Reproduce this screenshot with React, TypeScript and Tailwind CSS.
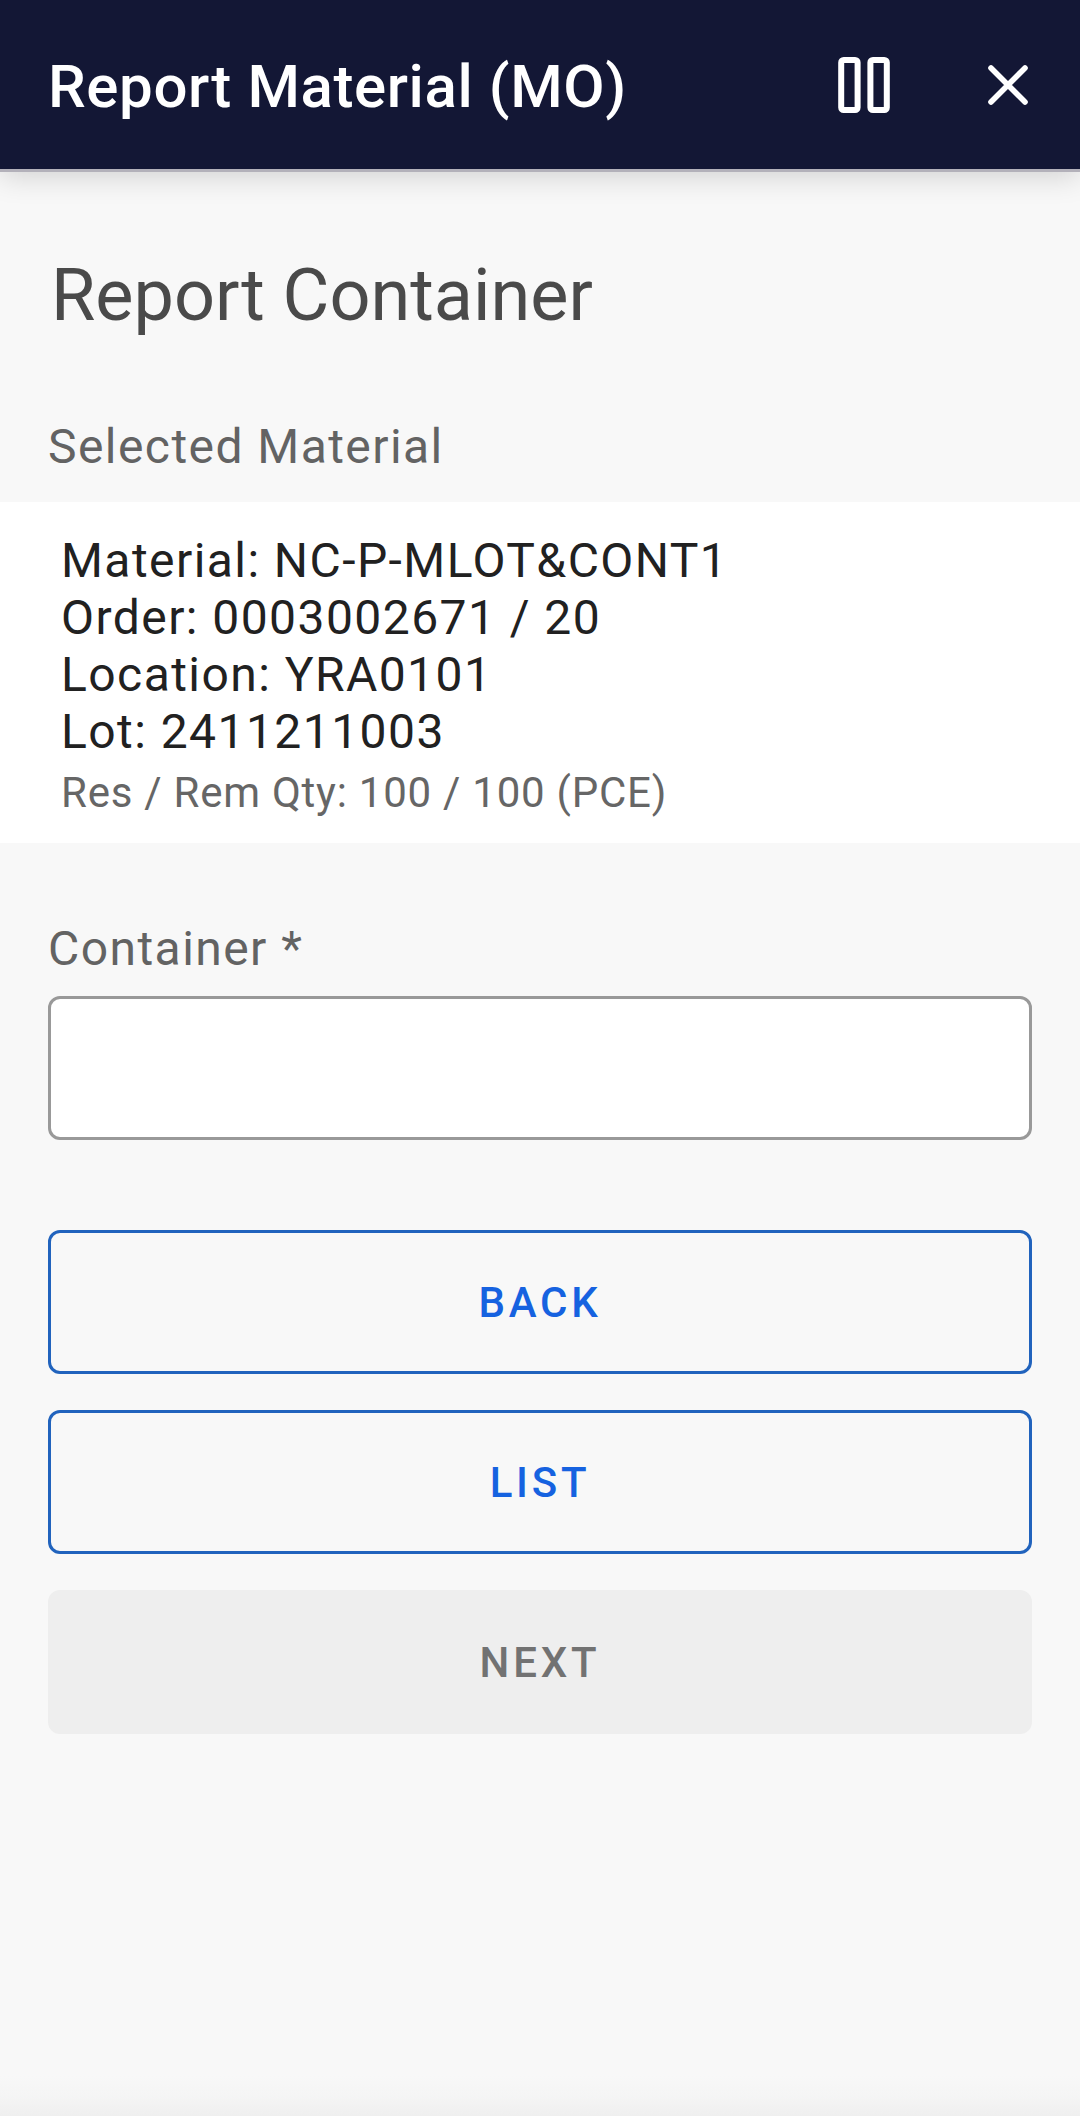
import React from 'react';

const details = [
  'Material: NC-P-MLOT&CONT1',
  'Order: 0003002671 / 20',
  'Location: YRA0101',
  'Lot: 2411211003',
];

function PauseIcon() {
  return (
    <svg viewBox="0 0 52 56" className="h-14 w-[52px]" fill="none" stroke="currentColor" strokeWidth="6" aria-hidden="true">
      <rect x="3.2" y="3" width="16.4" height="50" rx="2.5" />
      <rect x="32.4" y="3" width="16.4" height="50" rx="2.5" />
    </svg>
  );
}

function CloseIcon() {
  return (
    <svg viewBox="0 0 40 40" className="size-10" fill="none" stroke="currentColor" strokeWidth="5.6" strokeLinecap="round" aria-hidden="true">
      <path d="M3 3 37 37M37 3 3 37" />
    </svg>
  );
}

export default function App() {
  return (
    <div className="flex min-h-screen flex-col bg-[#f8f8f8] font-[Roboto,sans-serif]">
      <header className="flex h-[172px] items-center border-b-3 border-[#b3b1ba] bg-[#131735] pr-[52px] pl-12 text-white shadow-[0_4px_28px_rgba(0,0,0,0.16)]">
        <h1 className="flex-1 pt-1 text-[60px] leading-[72px] font-medium tracking-[0.01em]">Report Material (MO)</h1>
        <div className="flex items-center gap-[98px]">
          <button type="button" aria-label="Pause"><PauseIcon /></button>
          <button type="button" aria-label="Close"><CloseIcon /></button>
        </div>
      </header>
      <main>
        <h2 className="px-[51px] pt-[82px] text-[72px] leading-[84px] text-[#4a4a4a]">Report Container</h2>
        <h3 className="px-12 pt-[81px] pb-[27px] text-[48px] leading-[56px] tracking-[0.03em] text-[#636363]">Selected Material</h3>
        <section className="bg-white px-[61px] pt-[30px] pb-[22px] text-[#212121]">
          {details.map((line) => (
            <p key={line} className="text-[48px] leading-[57px] tracking-[0.03em]">{line}</p>
          ))}
          <p className="mt-1 text-[42px] leading-[57px] tracking-[0.018em] text-[#666666]">Res / Rem Qty: 100 / 100 (PCE)</p>
        </section>
        <form className="px-12 pt-[78px]" onSubmit={(e) => e.preventDefault()}>
          <label htmlFor="container" className="block text-[48px] leading-[56px] tracking-[0.03em] text-[#636363]">Container *</label>
          <input id="container" type="text" className="mt-[19px] block h-36 w-full rounded-xl border-3 border-[#999999] bg-white px-6 text-[48px]" />
          <div className="mt-[90px] flex flex-col gap-9 text-[42px] font-medium tracking-[0.09em]">
            <button type="button" className="h-36 rounded-xl border-3 border-[#2163bd] text-[#1662e0]">BACK</button>
            <button type="button" className="h-36 rounded-xl border-3 border-[#2163bd] text-[#1662e0]">LIST</button>
            <button type="submit" disabled className="h-36 rounded-xl bg-[#eeeeee] text-[#727272]">NEXT</button>
          </div>
        </form>
      </main>
      <div className="mt-auto h-10 bg-linear-to-b from-[#f8f8f8] via-[#f5f5f5] to-[#efefef]" />
    </div>
  );
}
